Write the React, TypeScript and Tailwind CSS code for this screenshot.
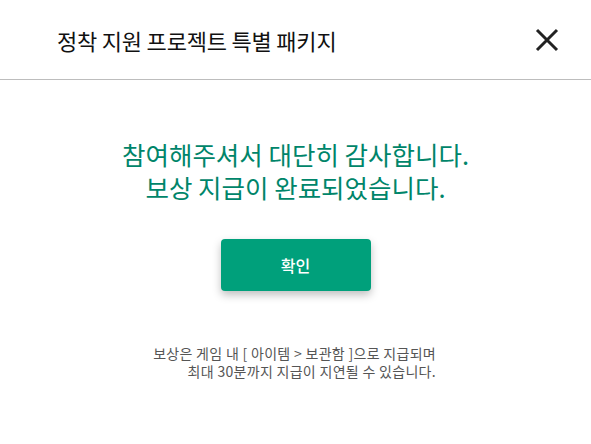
import React from "react";

const font = { fontFamily: '"Noto Sans CJK KR", "Noto Sans", sans-serif' };

export default function App() {
  return (
    <div className="w-[591px] h-[444px] bg-white flex flex-col" style={font}>
      {/* Header */}
      <header className="h-[80px] shrink-0 flex items-center justify-between pl-[57px] pr-[32px] border-b border-[#bdbdbd]">
        <h1 className="text-[22px] leading-none text-[#111] tracking-[-0.2px]">
          정착 지원 프로젝트 특별 패키지
        </h1>
        <button aria-label="닫기" className="w-[24px] h-[24px] flex items-center justify-center">
          <svg width="24" height="24" viewBox="0 0 24 24">
            <path d="M2 2 L22 22 M22 2 L2 22" stroke="#222" strokeWidth="3" strokeLinecap="butt" />
          </svg>
        </button>
      </header>

      {/* Body */}
      <main className="flex flex-col items-center pt-[57px]">
        <p className="text-[25.5px] leading-[33px] text-[#00856a] text-center">
          참여해주셔서 대단히 감사합니다.
          <br />
          보상 지급이 완료되었습니다.
        </p>

        <button className="mt-[36px] w-[150px] h-[52px] rounded-[4px] bg-[#00a07b] text-white text-[16px] font-medium shadow-[0_4px_8px_rgba(0,0,0,0.25)]">
          확인
        </button>

        <div className="mt-[53px] w-full pr-[155px] text-right text-[14px] leading-[18px] tracking-[0.3px] text-[#555]">
          보상은 게임 내 [ 아이템 &gt; 보관함 ]으로 지급되며
          <br />
          최대 30분까지 지급이 지연될 수 있습니다.
        </div>
      </main>
    </div>
  );
}
